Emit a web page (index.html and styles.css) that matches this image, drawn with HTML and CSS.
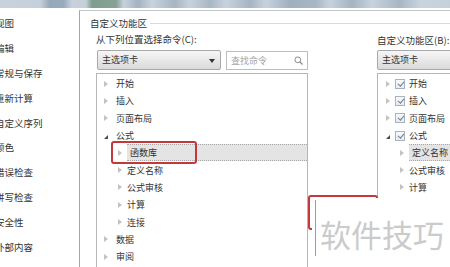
FILE: index.html
```html
<!DOCTYPE html>
<html lang="zh-CN">
<head>
    <meta charset="UTF-8">
    <meta name="viewport" content="width=device-width, initial-scale=1.0">
    <title>自定义功能区</title>
    <link rel="stylesheet" href="styles.css">
</head>
<body>
    <div class="topbar"></div>

    <div class="main">
        <ul class="nav">
            <li>视图</li>
            <li>编辑</li>
            <li>常规与保存</li>
            <li>重新计算</li>
            <li>自定义序列</li>
            <li>颜色</li>
            <li>错误检查</li>
            <li>拼写检查</li>
            <li>安全性</li>
            <li>外部内容</li>
        </ul>

        <div class="pane">
            <div class="group-title"><span>自定义功能区</span></div>

            <div class="columns">
                <!-- 左侧：命令来源 -->
                <div class="col col-left">
                    <div class="label">从下列位置选择命令(C):</div>
                    <div class="controls">
                        <div class="select">主选项卡<span class="caret"></span></div>
                        <div class="search">
                            <span>查找命令</span>
                            <svg width="9" height="9" viewBox="0 0 9 9"><circle cx="3.8" cy="3.8" r="2.9" fill="none" stroke="#8a8a8a" stroke-width="1"/><path d="M6 6 L8.5 8.5" stroke="#8a8a8a" stroke-width="1.2"/></svg>
                        </div>
                    </div>
                    <ul class="tree">
                        <li class="row"><i class="arrow"></i>开始</li>
                        <li class="row"><i class="arrow"></i>插入</li>
                        <li class="row"><i class="arrow"></i>页面布局</li>
                        <li class="row"><i class="arrow open"></i>公式</li>
                        <li class="row child marked"><i class="arrow"></i><span class="sel">函数库</span><span class="mark"></span></li>
                        <li class="row child"><i class="arrow"></i>定义名称</li>
                        <li class="row child"><i class="arrow"></i>公式审核</li>
                        <li class="row child"><i class="arrow"></i>计算</li>
                        <li class="row child"><i class="arrow"></i>连接</li>
                        <li class="row"><i class="arrow"></i>数据</li>
                        <li class="row"><i class="arrow"></i>审阅</li>
                    </ul>
                </div>

                <!-- 右侧：当前功能区 -->
                <div class="col col-right">
                    <div class="label">自定义功能区(B):</div>
                    <div class="controls">
                        <div class="select wide">主选项卡</div>
                    </div>
                    <ul class="tree tree-right">
                        <li class="row"><i class="arrow"></i><i class="check"></i>开始</li>
                        <li class="row"><i class="arrow"></i><i class="check"></i>插入</li>
                        <li class="row"><i class="arrow"></i><i class="check"></i>页面布局</li>
                        <li class="row"><i class="arrow open"></i><i class="check"></i>公式</li>
                        <li class="row child"><i class="arrow"></i><span class="sel">定义名称</span></li>
                        <li class="row child"><i class="arrow"></i>公式审核</li>
                        <li class="row child"><i class="arrow"></i>计算</li>
                    </ul>
                </div>
            </div>
        </div>
    </div>

    <div class="stamp"></div>
    <div class="cover"><span>软件技巧</span></div>
</body>
</html>
```

FILE: styles.css
```css
body {
    margin: 0;
    width: 450px;
    height: 267px;
    overflow: hidden;
    position: relative;
    background-color: #ffffff;
    font-family: "Noto Sans CJK SC", "Noto Sans", sans-serif;
    font-size: 9px;
    color: #333333;
}

.topbar {
    height: 8px;
    background: linear-gradient(90deg,
        #c8d2dc 0, #c6d0da 40px, #95a7b8 50px, #9aabbc 64px, #c8d2dc 72px,
        #c4cfd9 86px, #7f9d8e 92px, #86a294 116px, #c8d2dc 124px,
        #a3b2c1 138px, #c8d2dc 152px, #a6b5c3 175px, #c8d2dc 190px,
        #a8b7c5 210px, #c8d2dc 226px, #a6b5c3 250px, #c8d2dc 266px,
        #9fb0c0 290px, #a8b7c5 316px, #c8d2dc 330px, #a5b4c2 352px,
        #c8d2dc 372px, #a8b6c4 400px, #c9d3dd 420px, #c6d0da 450px);
}

.main {
    display: flex;
    height: 259px;
}

/* 左侧导航 */
.nav {
    width: 79px;
    flex: none;
    margin: 0;
    padding: 3px 0 0;
    list-style: none;
}

.nav li {
    height: 24.9px;
    line-height: 24.9px;
    margin-left: -5px;
    white-space: nowrap;
    font-size: 9.5px;
}

.pane {
    flex: 1;
    min-width: 0;
    margin-top: 2px;
    border-top: 1px solid #c2c6ca;
    border-left: 1px solid #a2a7ac;
    padding-left: 16px;
}

.group-title {
    display: flex;
    align-items: center;
    height: 14px;
    margin: 5px 0 0 -6px;
    font-size: 9.5px;
}

.group-title::after {
    content: "";
    flex: 1;
    height: 1px;
    margin-left: 3px;
    background-color: #d6dce2;
}

.columns {
    display: flex;
    gap: 69px;
    margin-top: 2px;
}

.col {
    flex: none;
}

.col-left {
    width: 212px;
}

.col-right {
    width: 110px;
}

.label {
    height: 14px;
    line-height: 14px;
    white-space: nowrap;
    font-size: 9.5px;
}

.col-right .label {
    margin-top: 1px;
    margin-bottom: -1px;
}

.controls {
    display: flex;
    gap: 5px;
    height: 20px;
    margin-top: 4px;
}

.select {
    position: relative;
    width: 124px;
    margin-left: 1px;
    box-sizing: border-box;
    border: 1px solid #a9a9a9;
    border-radius: 2px;
    background: linear-gradient(#f6f6f6, #dadada);
    padding-left: 4px;
    line-height: 18px;
}

.select.wide {
    margin-left: 0;
    width: 100px;
}

.caret {
    position: absolute;
    right: 5px;
    top: 8px;
    border-top: 4px solid #333333;
    border-left: 3px solid transparent;
    border-right: 3px solid transparent;
}

.search {
    display: flex;
    align-items: center;
    justify-content: space-between;
    flex: 1;
    margin-top: 1px;
    box-sizing: border-box;
    border: 1px solid #bdbdbd;
    padding: 0 4px;
    color: #a5a5a5;
}

/* 树形列表 */
.tree {
    height: 260px;
    margin: 3px 0 0;
    padding: 1px 0 0;
    list-style: none;
    border: 1px solid #b6b6b6;
}

.row {
    position: relative;
    display: flex;
    align-items: center;
    height: 17.3px;
    padding-left: 7px;
    white-space: nowrap;
}

.row.child {
    padding-left: 21px;
}

.arrow {
    flex: none;
    width: 0;
    height: 0;
    margin-right: 8px;
    border-left: 4px solid #c3c3c3;
    border-top: 3.5px solid transparent;
    border-bottom: 3.5px solid transparent;
}

.arrow.open {
    border-left: 4px solid transparent;
    border-top: 0;
    border-bottom: 4px solid #4a4a4a;
    margin-top: 2px;
}

.row.child .arrow {
    margin-right: 5px;
}

.sel {
    flex: 1;
    align-self: stretch;
    display: flex;
    align-items: center;
    padding-left: 3px;
    background-color: #e4e4e4;
    border-top: 1px dotted #a8a8a8;
    border-bottom: 1px dotted #a8a8a8;
}

.mark {
    position: absolute;
    left: 14px;
    top: -3px;
    width: 86px;
    height: 23px;
    box-sizing: border-box;
    border: 2px solid #c4383c;
    border-radius: 3px;
}

.tree-right .row {
    padding-left: 8px;
}

.tree-right .row.child {
    padding-left: 22px;
}

.tree-right .arrow {
    margin-right: 5px;
}

.check {
    position: relative;
    flex: none;
    width: 10px;
    height: 10px;
    margin-right: 4px;
    box-sizing: border-box;
    border: 1px solid #a9b3c0;
    background: linear-gradient(#f8f9fb, #e8ebef);
}

.check::after {
    content: "";
    position: absolute;
    left: 2.5px;
    top: 0;
    width: 2.5px;
    height: 5px;
    border-right: 1.3px solid #6f7f94;
    border-bottom: 1.3px solid #6f7f94;
    transform: rotate(40deg);
}

/* 遮盖与水印 */
.stamp {
    position: absolute;
    left: 308px;
    top: 195px;
    width: 70px;
    height: 35px;
    box-sizing: border-box;
    border: 2px solid #c4383c;
    border-radius: 3px;
    background-color: #ffffff;
}

.cover {
    position: absolute;
    left: 312px;
    top: 198px;
    right: 0;
    bottom: 0;
    padding: 18px 0 0 8px;
    background-color: #ffffff;
}

.cover::before {
    content: "";
    position: absolute;
    left: 3px;
    top: 2px;
    width: 1px;
    height: 56px;
    background-color: #9c9c9c;
}

.cover span {
    display: block;
    font-size: 31px;
    line-height: 36px;
    color: #cbcbcb;
    white-space: nowrap;
}
```
